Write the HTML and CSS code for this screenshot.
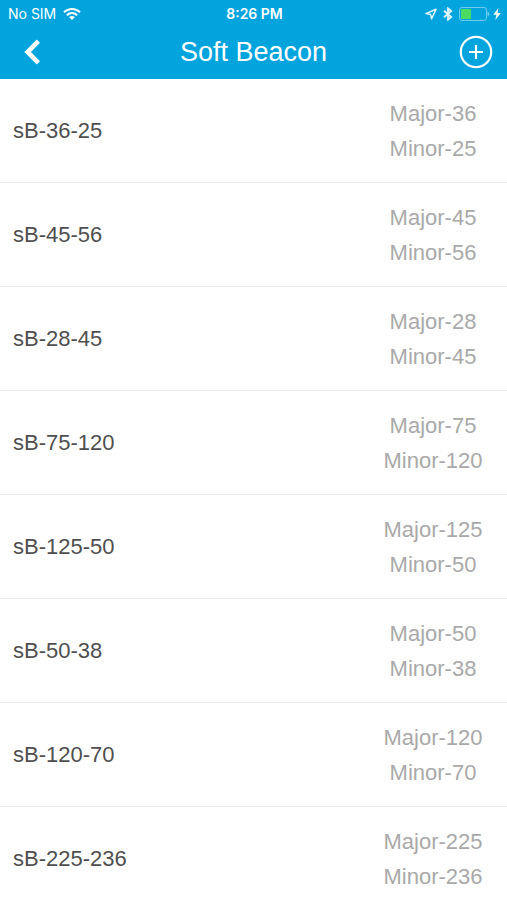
FILE: index.html
```html
<!DOCTYPE html>
<html lang="en">
<head>
  <meta charset="UTF-8">
  <meta name="viewport" content="width=device-width, initial-scale=1">
  <title>Soft Beacon</title>
  <link rel="stylesheet" href="styles.css">
</head>
<body>
  <header class="header">
    <!-- Status bar -->
    <div class="status-bar">
      <div class="carrier">
        <span>No SIM</span>
        <svg width="18" height="14" viewBox="0 0 18 14" fill="none" stroke="#fff" stroke-width="2">
          <path d="M1 5.2C5.4 0.8 12.6 0.8 17 5.2"/>
          <path d="M3.9 8.2C6.8 5.3 11.2 5.3 14.1 8.2"/>
          <path d="M9 13L6.2 10.2C7.8 8.7 10.2 8.7 11.8 10.2Z" fill="#fff" stroke="none"/>
        </svg>
      </div>
      <span class="clock">8:26 PM</span>
      <div class="indicators">
        <svg width="12" height="12" viewBox="0 0 12 12" fill="none" stroke="#e3f6ff" stroke-width="1.5" stroke-linejoin="round">
          <path d="M11 1.2L1 5.6L5.6 6.4L6.6 10.8Z"/>
        </svg>
        <svg class="bluetooth" width="10" height="14" viewBox="0 0 10 14" fill="none" stroke="#e3f6ff" stroke-width="1.8">
          <path d="M1 3.8L8.2 10L5 12.6V1.4L8.2 4L1 10.2"/>
        </svg>
        <svg width="31" height="14" viewBox="0 0 31 14">
          <rect x="0.5" y="0.5" width="27" height="13" rx="2.5" fill="none" stroke="#6fcdf1"/>
          <rect x="2" y="2" width="10" height="10" rx="1" fill="#4cdb62"/>
          <path d="M28.5 4.5C30.8 5.3 30.8 8.7 28.5 9.5Z" fill="#6fcdf1"/>
        </svg>
        <svg width="8" height="12" viewBox="0 0 8 12" fill="#fff">
          <path d="M5.4 0L0.3 6.8H3.4L2.3 12L7.8 4.9H4.6Z"/>
        </svg>
      </div>
    </div>

    <!-- Navigation bar -->
    <div class="nav-bar">
      <button type="button" class="nav-btn back-btn" aria-label="Back">
        <svg width="16" height="26" viewBox="0 0 16 26" fill="none" stroke="#fff" stroke-width="4.6">
          <path d="M14.4 2.2L3.6 13L14.4 23.8"/>
        </svg>
      </button>
      <h1 class="title">Soft Beacon</h1>
      <button type="button" class="nav-btn add-btn" aria-label="Add beacon">
        <svg width="34" height="34" viewBox="0 0 34 34" fill="none" stroke="#fff" stroke-width="2.2">
          <circle cx="17" cy="17" r="15.2"/>
          <path d="M17 10V24M10 17H24"/>
        </svg>
      </button>
    </div>
  </header>

  <ul class="beacon-list">
    <li class="beacon">
      <span class="beacon-name">sB-36-25</span>
      <div class="beacon-ids"><div>Major-36</div><div>Minor-25</div></div>
    </li>
    <li class="beacon">
      <span class="beacon-name">sB-45-56</span>
      <div class="beacon-ids"><div>Major-45</div><div>Minor-56</div></div>
    </li>
    <li class="beacon">
      <span class="beacon-name">sB-28-45</span>
      <div class="beacon-ids"><div>Major-28</div><div>Minor-45</div></div>
    </li>
    <li class="beacon">
      <span class="beacon-name">sB-75-120</span>
      <div class="beacon-ids"><div>Major-75</div><div>Minor-120</div></div>
    </li>
    <li class="beacon">
      <span class="beacon-name">sB-125-50</span>
      <div class="beacon-ids"><div>Major-125</div><div>Minor-50</div></div>
    </li>
    <li class="beacon">
      <span class="beacon-name">sB-50-38</span>
      <div class="beacon-ids"><div>Major-50</div><div>Minor-38</div></div>
    </li>
    <li class="beacon">
      <span class="beacon-name">sB-120-70</span>
      <div class="beacon-ids"><div>Major-120</div><div>Minor-70</div></div>
    </li>
    <li class="beacon">
      <span class="beacon-name">sB-225-236</span>
      <div class="beacon-ids"><div>Major-225</div><div>Minor-236</div></div>
    </li>
  </ul>
</body>
</html>
```
FILE: styles.css
```css
* {
  box-sizing: border-box;
}

body {
  margin: 0;
  height: 100vh;
  display: flex;
  flex-direction: column;
  background-color: #fff;
  font-family: "Liberation Sans", Arial, sans-serif;
}

.header {
  flex: none;
  background-color: #02a4de;
  color: #fff;
}

/* Status bar */
.status-bar {
  display: grid;
  grid-template-columns: 1fr auto 1fr;
  align-items: center;
  height: 27px;
  padding: 0 6px 0 8px;
  font-family: Inter, "Liberation Sans", sans-serif;
  font-size: 14px;
}

.carrier {
  display: flex;
  align-items: center;
  gap: 7px;
}

.clock {
  font-weight: 600;
}

.indicators {
  display: flex;
  align-items: center;
  justify-content: flex-end;
  gap: 3px;
}

.bluetooth {
  margin: 0 3px;
}

/* Navigation bar */
.nav-bar {
  display: grid;
  grid-template-columns: 1fr auto 1fr;
  align-items: center;
  height: 52px;
  padding: 0 14px 2px;
}

.nav-btn {
  display: flex;
  padding: 0;
  border: none;
  background: none;
  color: inherit;
  cursor: pointer;
}

.back-btn {
  justify-self: start;
  padding: 0 10px;
}

.add-btn {
  justify-self: end;
}

.title {
  margin: 0;
  font-size: 27px;
  font-weight: normal;
}

/* Beacon list */
.beacon-list {
  flex: 1;
  min-height: 0;
  margin: 0;
  padding: 0;
  overflow-y: auto;
  scrollbar-width: none;
  list-style: none;
}

.beacon {
  display: flex;
  align-items: center;
  justify-content: space-between;
  height: 104px;
  padding: 0 14px 0 13px;
  border-bottom: 1px solid #ebebeb;
  font-size: 22px;
  line-height: 35px;
}

.beacon-name {
  color: #4f4f4f;
}

.beacon-ids {
  width: 120px;
  color: #a9a9a9;
  text-align: center;
}
```
